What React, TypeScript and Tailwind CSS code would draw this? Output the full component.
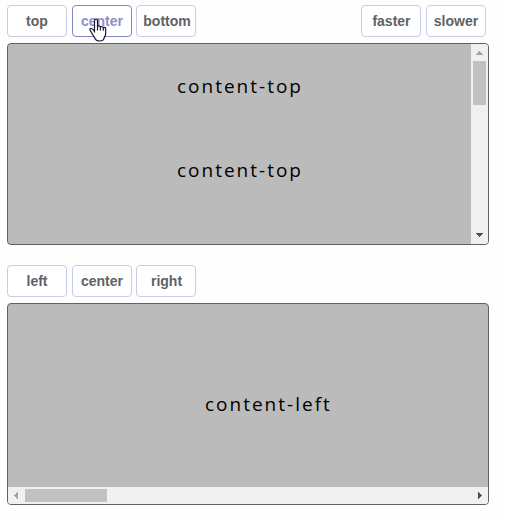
import React from "react";

type ButtonProps = { label: string; className?: string; active?: boolean };

function ControlButton({ label, className = "", active = false }: ButtonProps) {
  return (
    <button
      className={`h-8 w-[60px] shrink-0 cursor-pointer rounded-[4px] border bg-white text-center font-['Liberation_Sans',Arial,sans-serif] text-[14px] leading-[30px] font-bold whitespace-nowrap ${
        active ? "border-[#8288c2] text-[#8a8fc6]" : "border-[#c8cde3] text-[#606266]"
      } ${className}`}
    >
      {label}
    </button>
  );
}

function Arrow({ points, color }: { points: string; color: string }) {
  return (
    <svg width="17" height="17" viewBox="0 0 17 17" shapeRendering="crispEdges" className="block shrink-0">
      <polygon points={points} fill={color} />
    </svg>
  );
}

function HandCursor() {
  return (
    <svg width="19" height="24" viewBox="0 0 19 24" className="pointer-events-none absolute top-[13px] left-[81px]">
      <path
        d="M6.5 14.6V2.8C6.5 1.8 7.1 1.2 8 1.2s1.5.6 1.5 1.6v6c.2-.7.7-1 1.4-1 .9 0 1.4.6 1.5 1.5.2-.5.7-.8 1.3-.8.9 0 1.4.6 1.5 1.5.3-.4.7-.6 1.1-.6.9 0 1.4.7 1.4 1.6v4.5c0 2.4-1.4 3.5-1.8 5.2-.3 1.4-1.8 2.3-4.3 2.3-2.3 0-3.8-.8-4.4-2.2-.6-1.5-1.6-2.4-2.4-4L3 13.7c-.7-1.2-1.6-2-1-2.8.7-.8 2-.4 2.8.5l1.7 1.9"
        fill="#fff"
        stroke="#16162a"
        strokeWidth="1.2"
        strokeLinejoin="round"
      />
      <path d="M9.5 8.5v4M12.4 9.2v3.3M15.3 10v2.8" fill="none" stroke="#16162a" strokeWidth="1.1" />
    </svg>
  );
}

const contentText =
  "font-['Open_Sans',sans-serif] text-[19px] font-[370] leading-[84px] tracking-[2px] text-black whitespace-nowrap";

export default function App() {
  return (
    <main className="h-[516px] w-[507px] overflow-hidden bg-[#fefefe] pt-[5px] pl-[7px]">
      <div className="relative flex h-8 w-[479px]">
        <ControlButton label="top" />
        <ControlButton label="center" active className="ml-[5px]" />
        <ControlButton label="bottom" className="ml-1 pl-0.5" />
        <ControlButton label="faster" className="ml-auto pl-px" />
        <ControlButton label="slower" className="ml-[5px]" />
        <HandCursor />
      </div>

      <section className="mt-1.5 flex h-[202px] w-[482px] overflow-hidden rounded-[4px] border border-[#606266] bg-[#bbbbbb]">
        <div className="flex-1 pl-[169px]">
          <p className={contentText}>content-top</p>
          <p className={contentText}>content-top</p>
        </div>
        <div className="flex w-[17px] flex-col items-center bg-[#f0f0f0]">
          <Arrow points="5,11 12,11 8.5,7" color="#a3a3a3" />
          <div className="h-11 w-[13px] bg-[#c1c1c1]" />
          <div className="flex-1" />
          <Arrow points="5,6 12,6 8.5,10" color="#505050" />
        </div>
      </section>

      <div className="mt-5 flex h-8">
        <ControlButton label="left" />
        <ControlButton label="center" className="ml-[5px]" />
        <ControlButton label="right" className="ml-1 pl-px" />
      </div>

      <section className="mt-1.5 flex h-[202px] w-[482px] flex-col overflow-hidden rounded-[4px] border border-[#606266] bg-[#bbbbbb]">
        <div className="flex-1 pt-[58px] pl-[197px]">
          <p className={contentText}>content-left</p>
        </div>
        <div className="flex h-[17px] items-center bg-[#f0f0f0]">
          <Arrow points="10,5 10,12 6,8.5" color="#a3a3a3" />
          <div className="h-[13px] w-[82px] bg-[#c1c1c1]" />
          <div className="flex-1" />
          <Arrow points="7,5 7,12 11,8.5" color="#505050" />
        </div>
      </section>
    </main>
  );
}
